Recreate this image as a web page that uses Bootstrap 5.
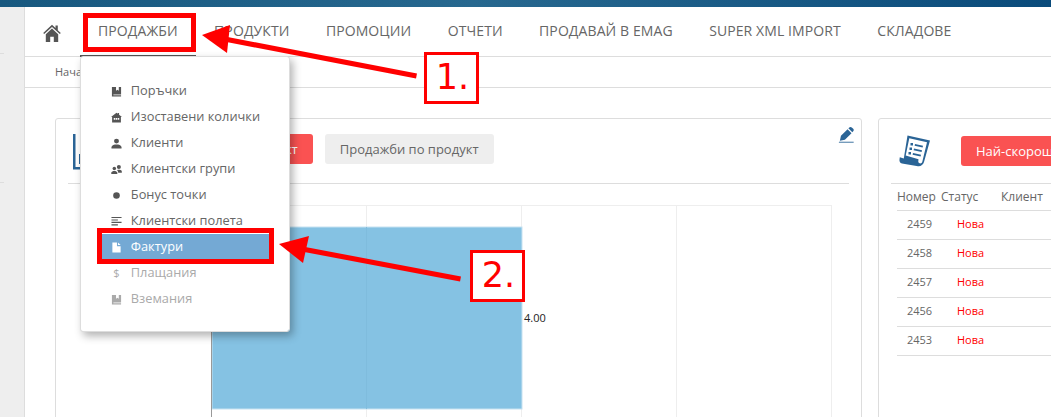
<!DOCTYPE html>
<html lang="bg">
<head>
  <meta charset="UTF-8">
  <meta name="viewport" content="width=device-width, initial-scale=1.0">
  <title>Продажби</title>
  <link href="https://cdn.jsdelivr.net/npm/bootstrap@5.3.0/dist/css/bootstrap.min.css" rel="stylesheet">
  <style>
    html, body { height: 417px; overflow: hidden; }
    body { font-family: "Open Sans", "Noto Sans", sans-serif; font-size: 13px; color: #666; background: #fff; position: relative; }
    .top-strip { height: 7px; background: linear-gradient(90deg, #17587f 0, #27688f 45%, #0a4b7b 100%); }
    .side-rail { width: 25px; flex: none; background: #eee; border-right: 1px solid #ddd; height: 410px; }
    .side-tick { height: 1px; width: 4px; background: #ddd; }
    .tick-a { margin-top: 46px; }
    .tick-b { margin-top: 128px; }
    .page-main { min-width: 0; }
    .main-nav { height: 50px; border-bottom: 1px solid #ddd; }
    .home-link { width: 54.8px; padding: 15px 0 0 18px; height: 49px; color: #555; }
    .main-link { padding: 0 18.2px; height: 50px; line-height: 48px; font-size: 14px; letter-spacing: .1px; color: #666; text-transform: uppercase; white-space: nowrap; }
    .main-link.current { border-bottom: 2px solid #555; height: 50px; }
    .crumb-bar { height: 31px; border-bottom: 1px solid #ddd; padding: 0 0 0 30px; line-height: 30px; font-size: 11px; color: #666; }
    .panes { padding: 30px 0 0 30px; gap: 16px; }
    .pane { flex: none; height: 330px; border-color: #ddd; border-radius: 3px; --bs-card-border-color: #ddd; }
    .pane-left { width: 807px; }
    .pane-right { width: 400px; }
    .pane-head { height: 65px; border-bottom: 1px solid #ddd; position: relative; }
    .pane-left .pane-head { margin: 0 12px; padding: 15px 0 0 5px; }
    .pane-right .pane-head { margin: 0 0 0 12px; padding: 17px 0 0 8px; }
    .pane-btn { height: 30px; padding: 0 15px; font-size: 13px; line-height: 30px; border: 0; border-radius: 3px; white-space: nowrap; }
    .btn-hot, .btn-hot:hover { background: #fa5252; color: #fff; }
    .btn-soft, .btn-soft:hover { background: #eee; color: #666; }
    .report-icon { width: 36px; height: 36px; margin-right: 29px; flex: none; }
    .scroll-icon { width: 32px; height: 32px; margin-right: 30px; margin-top: -1px; flex: none; }
    .edit-icon { position: absolute; top: 7px; right: -6px; }
    .chart-box { display: block; margin: 21px 0 0 155px; }
    .bar-label { font-family: "Open Sans", sans-serif; font-size: 11px; fill: #222; }
    .order-table { width: 382px; margin: 0 0 0 18px; font-size: 12px; table-layout: fixed; --bs-table-color: #666; --bs-table-border-color: #ddd; }
    .order-table th { font-weight: 400; height: 26px; padding: 0; vertical-align: middle; }
    .order-table td { height: 29px; padding: 0; vertical-align: middle; font-size: 11px; }
    .order-table td:first-child { padding-left: 10px; }
    .order-table td.state-new { padding-left: 16px; color: #f00; }
    .sales-menu { display: block; position: absolute; top: 49px; left: 0; width: 210px; min-width: 0; margin: 0; padding: 21px 0 19px; border: 1px solid #ddd; border-radius: 3px; box-shadow: 3px 4px 9px rgba(0, 0, 0, .3); z-index: 5; }
    .sales-menu .dropdown-item { display: flex; align-items: center; width: 168px; height: 26px; margin: 0 20px; padding: 0 0 0 10px; font-size: 12.8px; color: #666; gap: 9px; }
    .sales-menu .dropdown-item svg { width: 11px; height: 11px; fill: #555; flex: none; }
    .sales-menu .dropdown-item.picked { background: #74a9d4; color: #fff; }
    .sales-menu .dropdown-item.picked svg { fill: #fff; }
    .sales-menu .dropdown-item.off { color: #aaa; }
    .sales-menu .dropdown-item.off svg { fill: #aaa; }
    .coin-sign { width: 11px; text-align: center; flex: none; font-size: 11px; }
    .mark-box { position: absolute; z-index: 10; border: 5px solid #f00; }
    .mark-nav { left: 83px; top: 13px; width: 113px; height: 39px; }
    .mark-item { left: 97px; top: 228px; width: 177px; height: 36px; }
    .step-label { position: absolute; z-index: 10; width: 55px; height: 52px; padding-left: 2px; background: #fff; border: 3px solid #f00; color: #f00; font-family: "DejaVu Sans", sans-serif; font-size: 35px; line-height: 44px; text-align: center; }
    .step-one { left: 424px; top: 52px; }
    .step-two { left: 470px; top: 250px; }
    .arrow-layer { position: absolute; left: 0; top: 0; z-index: 9; pointer-events: none; }
  </style>
</head>
<body>
  <div class="top-strip"></div>
  <div class="d-flex">
    <aside class="side-rail">
      <div class="side-tick tick-a"></div>
      <div class="side-tick tick-b"></div>
    </aside>

    <div class="page-main flex-grow-1">
      <nav class="main-nav d-flex">
        <a class="home-link" href="#" aria-label="Начало">
          <svg width="18" height="18" viewBox="0 0 18 18" fill="currentColor"><path d="M9 0.8 0.2 9l1 1.1L9 3l7.8 7.1 1-1.1-3-2.8V1.5h-2.3v2.6z"/><path d="M9 4.6 2.8 10.2V18h4.4v-5.2h3.6V18h4.4v-7.8z"/></svg>
        </a>
        <div class="position-relative">
          <a class="main-link current d-block text-decoration-none" href="#">Продажби</a>
          <div class="dropdown-menu sales-menu">
            <a class="dropdown-item" href="#"><svg viewBox="0 0 12 12"><path d="M1 1h4.500v4.200L7 4l1.500 1.200V1H11v8.200H2.600v.9H11V11.500H1z"/></svg>Поръчки</a>
            <a class="dropdown-item" href="#"><svg viewBox="0 0 12 12"><path fill-rule="evenodd" d="M6 .8 0 5.500h1.200v6h9.600v-6H12L8.800 3V1.200H7.400v.7zM3 6.500h1.600v2H3zm2.200 0h1.600v2H5.200zm2.200 0H9v2H7.400z"/></svg>Изоставени колички</a>
            <a class="dropdown-item" href="#"><svg viewBox="0 0 12 12"><circle cx="6" cy="3.400" r="2.700"/><path d="M0.500 11.500V9.800C1 8 3 7.400 4.300 7h3.400c1.300.4 3.300 1 3.800 2.800v1.700z"/></svg>Клиенти</a>
            <a class="dropdown-item" href="#"><svg viewBox="0 0 12 12"><circle cx="3.600" cy="5" r="1.900"/><circle cx="8.600" cy="3.200" r="2.200"/><path d="M.3 11V9.400C.6 8.200 2 7.600 3.600 7.600s3 .6 3.300 1.800V11zM7.600 6.200h2c1 .2 2.200.8 2.200 2v1.400H7.900C7.800 8.200 7.200 7 6.400 6.800c.3-.3.7-.5 1.200-.6z"/></svg>Клиентски групи</a>
            <a class="dropdown-item" href="#"><svg viewBox="0 0 12 12"><circle cx="6" cy="6" r="3.600"/></svg>Бонус точки</a>
            <a class="dropdown-item" href="#"><svg viewBox="0 0 12 12"><path d="M.5 1h11v1.300H.5zM.5 3.700h7v1.300h-7zM.5 6.400h11v1.300H.5zM.5 9.100h7v1.300h-7z"/></svg>Клиентски полета</a>
            <a class="dropdown-item picked" href="#"><svg viewBox="0 0 12 12"><path d="M1.500.5h5v4h4v7h-9zM7.600.5l2.900 2.900H7.600z"/></svg>Фактури</a>
            <a class="dropdown-item off" href="#"><span class="coin-sign">$</span>Плащания</a>
            <a class="dropdown-item off" href="#"><svg viewBox="0 0 12 12"><path d="M1 1h4.500v4.200L7 4l1.500 1.200V1H11v8.200H2.600v.9H11V11.500H1z"/></svg>Вземания</a>
          </div>
        </div>
        <a class="main-link text-decoration-none" href="#">Продукти</a>
        <a class="main-link text-decoration-none" href="#">Промоции</a>
        <a class="main-link text-decoration-none" href="#">Отчети</a>
        <a class="main-link text-decoration-none" href="#">Продавай в eMAG</a>
        <a class="main-link text-decoration-none" href="#">Super XML Import</a>
        <a class="main-link text-decoration-none" href="#">Складове</a>
      </nav>

      <div class="crumb-bar">Начало</div>

      <div class="panes d-flex">
        <section class="card pane pane-left">
          <div class="pane-head d-flex">
            <svg class="report-icon" viewBox="0 0 36 36" fill="#2a6496"><path d="M0 0h2.500v33H36v2.500H0z"/><path d="M6 20h3v10H6zM12 14h3v16h-3zM18 18h3v12h-3z"/></svg>
            <button class="btn pane-btn btn-hot me-2" type="button">Най-продаван продукт</button>
            <button class="btn pane-btn btn-soft ms-1" type="button">Продажби по продукт</button>
            <svg class="edit-icon" width="17" height="17" viewBox="0 0 19 19" fill="#2a6496"><path d="M12.600 1.600c.8-.8 2-.8 2.800 0l1.600 1.600c.8.8.8 2 0 2.800l-1 1-4.400-4.400zM10.700 3.600l4.400 4.400-7.400 7.400-5.600 1.200 1.200-5.600z"/><path d="M1 17.600h16.500v1H1z"/></svg>
          </div>
          <svg class="chart-box" width="625" height="215" viewBox="0 0 625 215">
            <path d="M0 .5h620" stroke="#eee" fill="none"/>
            <path d="M155.500 0v215M310.500 0v215M465.500 0v215M620.500 0v215" stroke="#eee" fill="none"/>
            <rect x="1" y="22" width="310" height="182" fill="#85c2e3" stroke="#c6e2f1"/>
            <path d="M155.500 22v182" stroke="#7fbcdd" fill="none"/>
            <path d="M.5 0v215" stroke="#999" fill="none"/>
            <text class="bar-label" x="313" y="117">4.00</text>
          </svg>
        </section>

        <section class="card pane pane-right">
          <div class="pane-head d-flex">
            <svg class="scroll-icon" viewBox="0 0 32 32" fill="#2a6496"><path fill-rule="evenodd" d="M8.500 .5 31 5.500 25 27c-.8 2.800-3.200 4.500-6 4.200L3 28.400C1 28 .2 26.500.5 24.200l.3-2 4 1.200zM10.300 3.200 6.700 20.500l12.800 3.800-.2 2c-.1 1 .4 1.700 1.400 2 1.300.3 2.200-.3 2.600-1.600L28 7.200z"/><path d="M11.500 8h2.500v2.500h-2.500zM16 9l8 1.800-.4 1.800-8-1.800zM10.500 12.500H13V15h-2.500zM15 13.500l8 1.800-.4 1.800-8-1.800zM9.500 17h2.500v2.500H9.500zM14 18l8 1.800-.4 1.800-8-1.800z"/></svg>
            <button class="btn pane-btn btn-hot" type="button">Най-скорошни поръчки</button>
          </div>
          <table class="table order-table">
            <colgroup><col style="width:44px"><col style="width:60px"><col></colgroup>
            <thead>
              <tr><th>Номер</th><th>Статус</th><th>Клиент</th></tr>
            </thead>
            <tbody>
              <tr><td>2459</td><td class="state-new">Нова</td><td></td></tr>
              <tr><td>2458</td><td class="state-new">Нова</td><td></td></tr>
              <tr><td>2457</td><td class="state-new">Нова</td><td></td></tr>
              <tr><td>2456</td><td class="state-new">Нова</td><td></td></tr>
              <tr><td>2453</td><td class="state-new">Нова</td><td></td></tr>
            </tbody>
          </table>
        </section>
      </div>
    </div>
  </div>

  <!-- annotations drawn over the page -->
  <div class="mark-box mark-nav"></div>
  <div class="mark-box mark-item"></div>
  <svg class="arrow-layer" width="1051" height="417" viewBox="0 0 1051 417" fill="#f00" stroke="none">
    <path d="M202 35 230 25 227 53z"/>
    <path d="M225 36.500 417 73.500 416 78.500 224 41.500z"/>
    <path d="M279 244 309 236 303 263z"/>
    <path d="M300 246 461 276.500 460 281.500 299 251z"/>
  </svg>
  <div class="step-label step-one">1.</div>
  <div class="step-label step-two">2.</div>

  <script src="https://cdn.jsdelivr.net/npm/bootstrap@5.3.0/dist/js/bootstrap.bundle.min.js"></script>
</body>
</html>
